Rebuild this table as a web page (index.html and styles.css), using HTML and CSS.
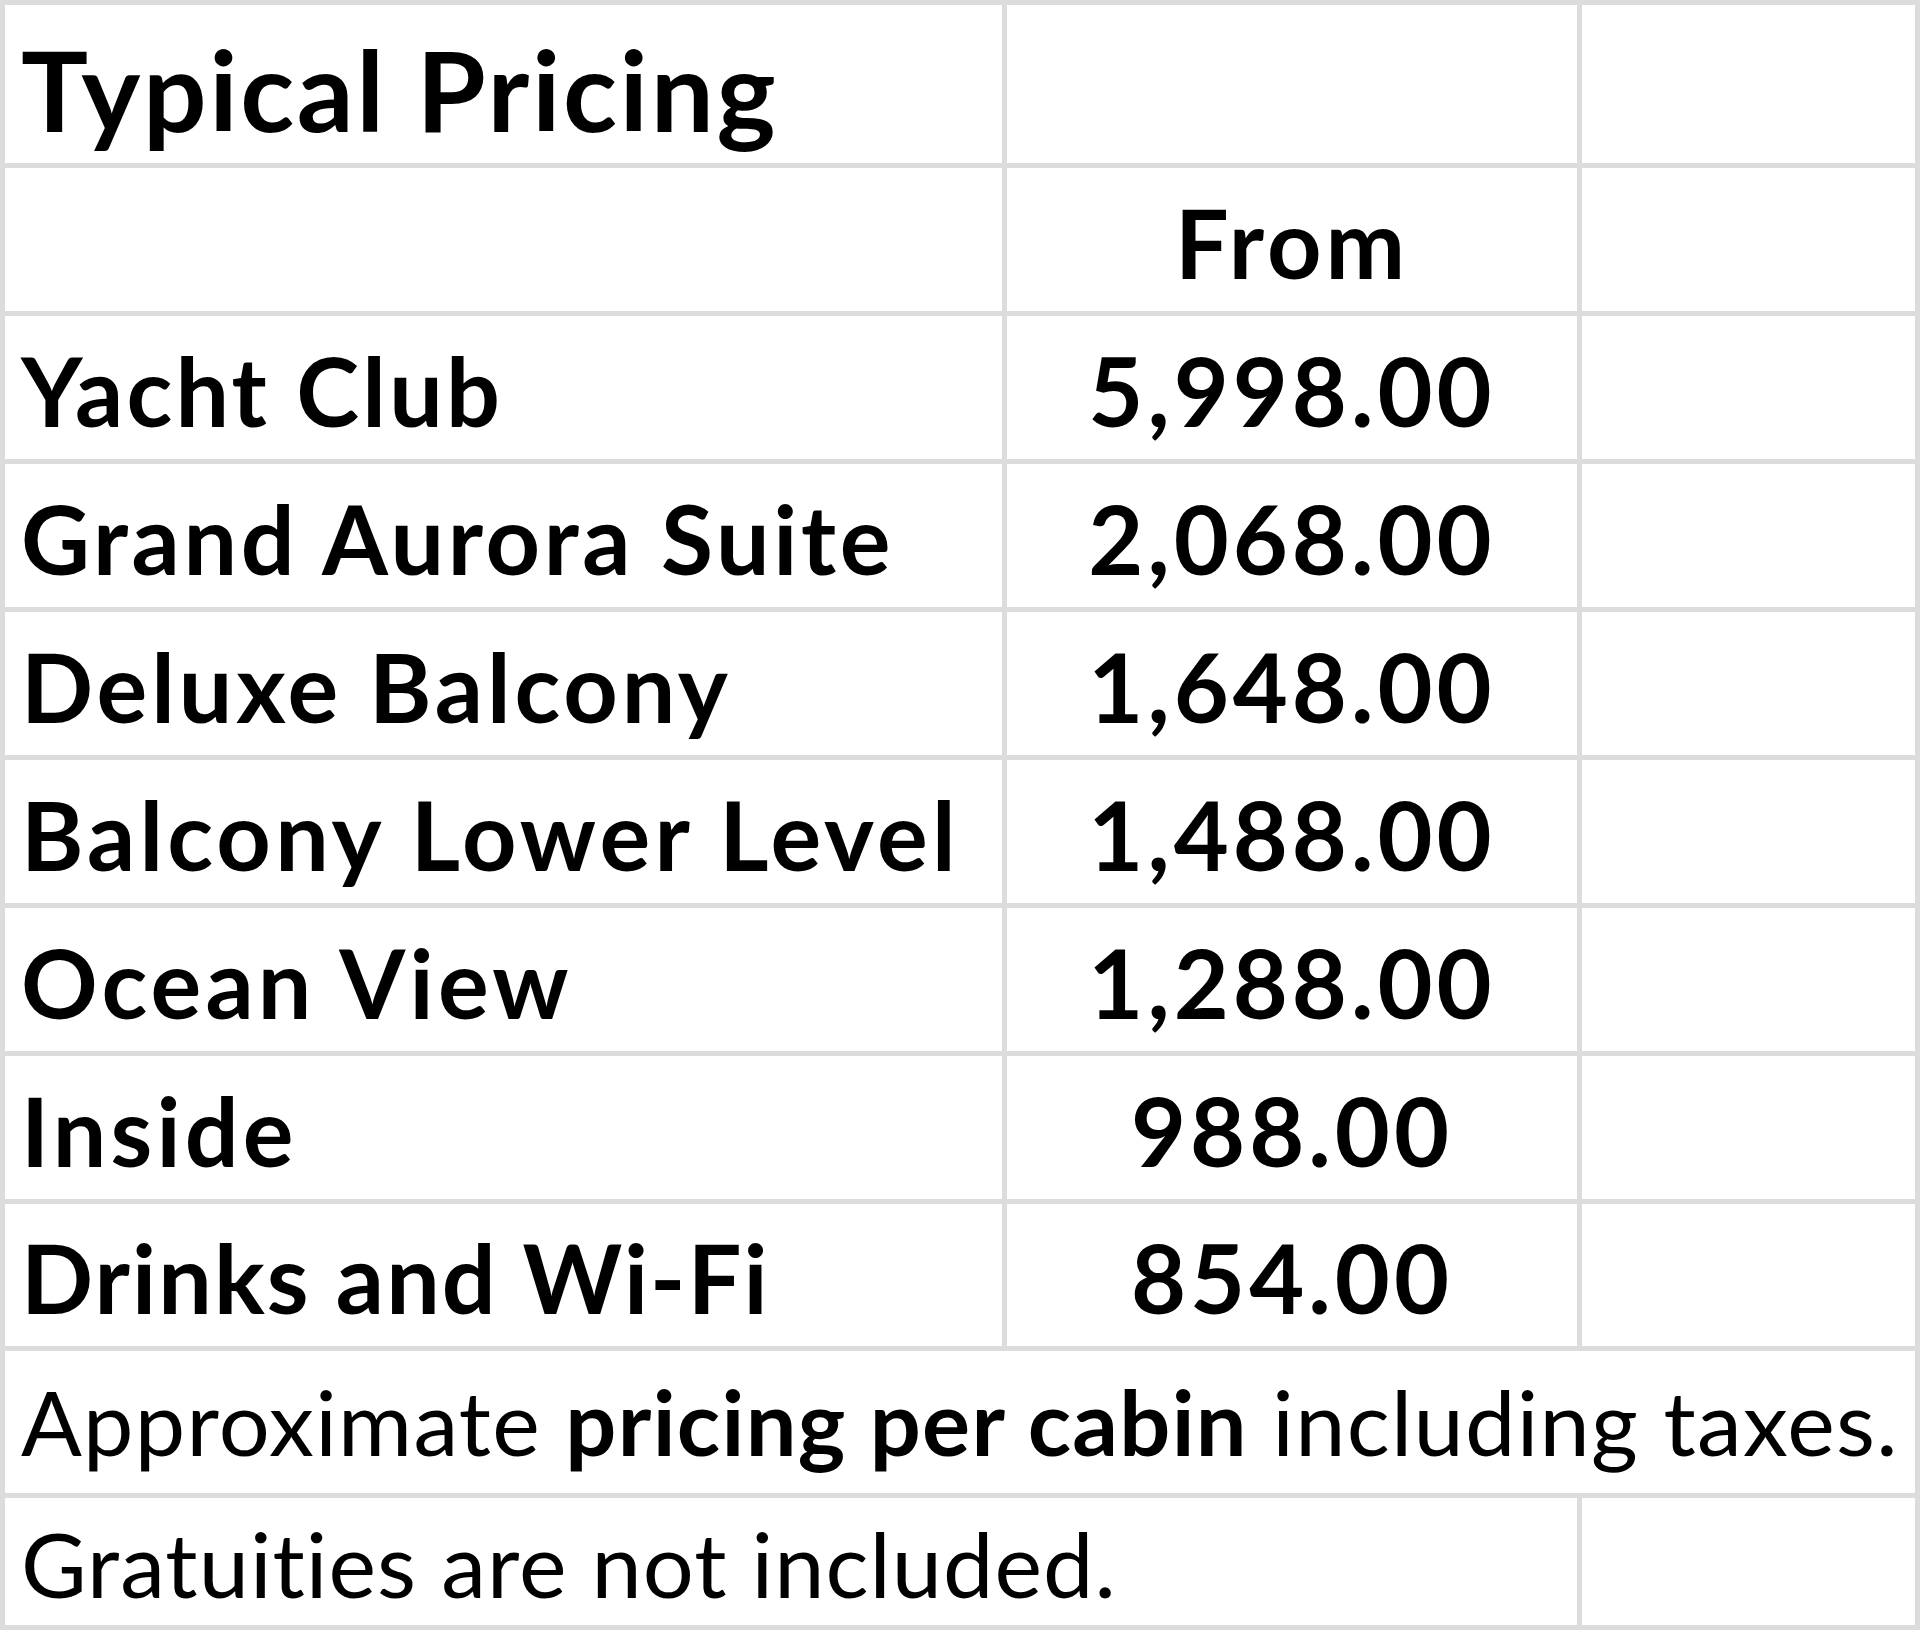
FILE: index.html
```html
<!DOCTYPE html>
<html lang="en">
<head>
<meta charset="utf-8">
<title>Typical Pricing</title>
<link rel="stylesheet" href="styles.css">
</head>
<body>
<div class="sheet">
  <div class="cell label title"><span>Typical Pricing</span></div>
  <div class="cell"></div>
  <div class="cell"></div>

  <div class="cell"></div>
  <div class="cell num"><span>From</span></div>
  <div class="cell"></div>

  <div class="cell label ls-mid"><span>Yacht Club</span></div>
  <div class="cell num"><span>5,998.00</span></div>
  <div class="cell"></div>

  <div class="cell label ls-grand"><span>Grand Aurora Suite</span></div>
  <div class="cell num"><span>2,068.00</span></div>
  <div class="cell"></div>

  <div class="cell label ls-deluxe"><span>Deluxe Balcony</span></div>
  <div class="cell num"><span>1,648.00</span></div>
  <div class="cell"></div>

  <div class="cell label"><span>Balcony Lower Level</span></div>
  <div class="cell num"><span>1,488.00</span></div>
  <div class="cell"></div>

  <div class="cell label"><span>Ocean View</span></div>
  <div class="cell num"><span>1,288.00</span></div>
  <div class="cell"></div>

  <div class="cell label"><span>Inside</span></div>
  <div class="cell num"><span>988.00</span></div>
  <div class="cell"></div>

  <div class="cell label ls-tight"><span>Drinks and Wi-Fi</span></div>
  <div class="cell num"><span>854.00</span></div>
  <div class="cell"></div>

  <div class="cell note span-all"><span>Approximate <b>pricing per cabin</b> including taxes.</span></div>

  <div class="cell note note-last span-two"><span>Gratuities are not included.</span></div>
  <div class="cell"></div>
</div>
</body>
</html>
```

FILE: styles.css
```css
html, body {
  margin: 0;
  padding: 0;
  background: #ffffff;
}

.sheet {
  width: 1920px;
  height: 1630px;
  box-sizing: border-box;
  padding: 5px;
  display: grid;
  grid-template-columns: 997px 570px 333px;
  grid-template-rows: 158px repeat(7, 143px) 142px 142px 127px;
  gap: 5px;
  background: #dcdcdc;
  overflow: hidden;
  font-family: "Lato", "Liberation Sans", sans-serif;
  font-variant-ligatures: none;
  color: #000000;
}

.cell {
  background: #ffffff;
  display: flex;
  align-items: flex-end;
  white-space: nowrap;
  line-height: 1;
  overflow: visible;
  min-width: 0;
}

.label {
  font-weight: 700;
  font-size: 95px;
  letter-spacing: 4.2px;
  padding: 0 0 21px 16px;
}

.ls-mid {
  letter-spacing: 3.2px;
}

.ls-grand {
  letter-spacing: 3.7px;
}

.ls-deluxe {
  letter-spacing: 3.9px;
}

.ls-tight {
  letter-spacing: 2.1px;
}

.title {
  font-size: 112px;
  letter-spacing: 2.6px;
  padding-bottom: 18px;
}

.num {
  font-weight: 700;
  font-size: 95px;
  letter-spacing: 4px;
  justify-content: center;
  padding-bottom: 21px;
}

.note {
  font-weight: 400;
  font-size: 90px;
  letter-spacing: 1.3px;
  padding: 0 0 27px 16px;
}

.note b {
  font-weight: 700;
}

.note-last {
  letter-spacing: 1.05px;
  padding-bottom: 17px;
}

.span-all {
  grid-column: 1 / -1;
}

.span-two {
  grid-column: 1 / 3;
}
```
